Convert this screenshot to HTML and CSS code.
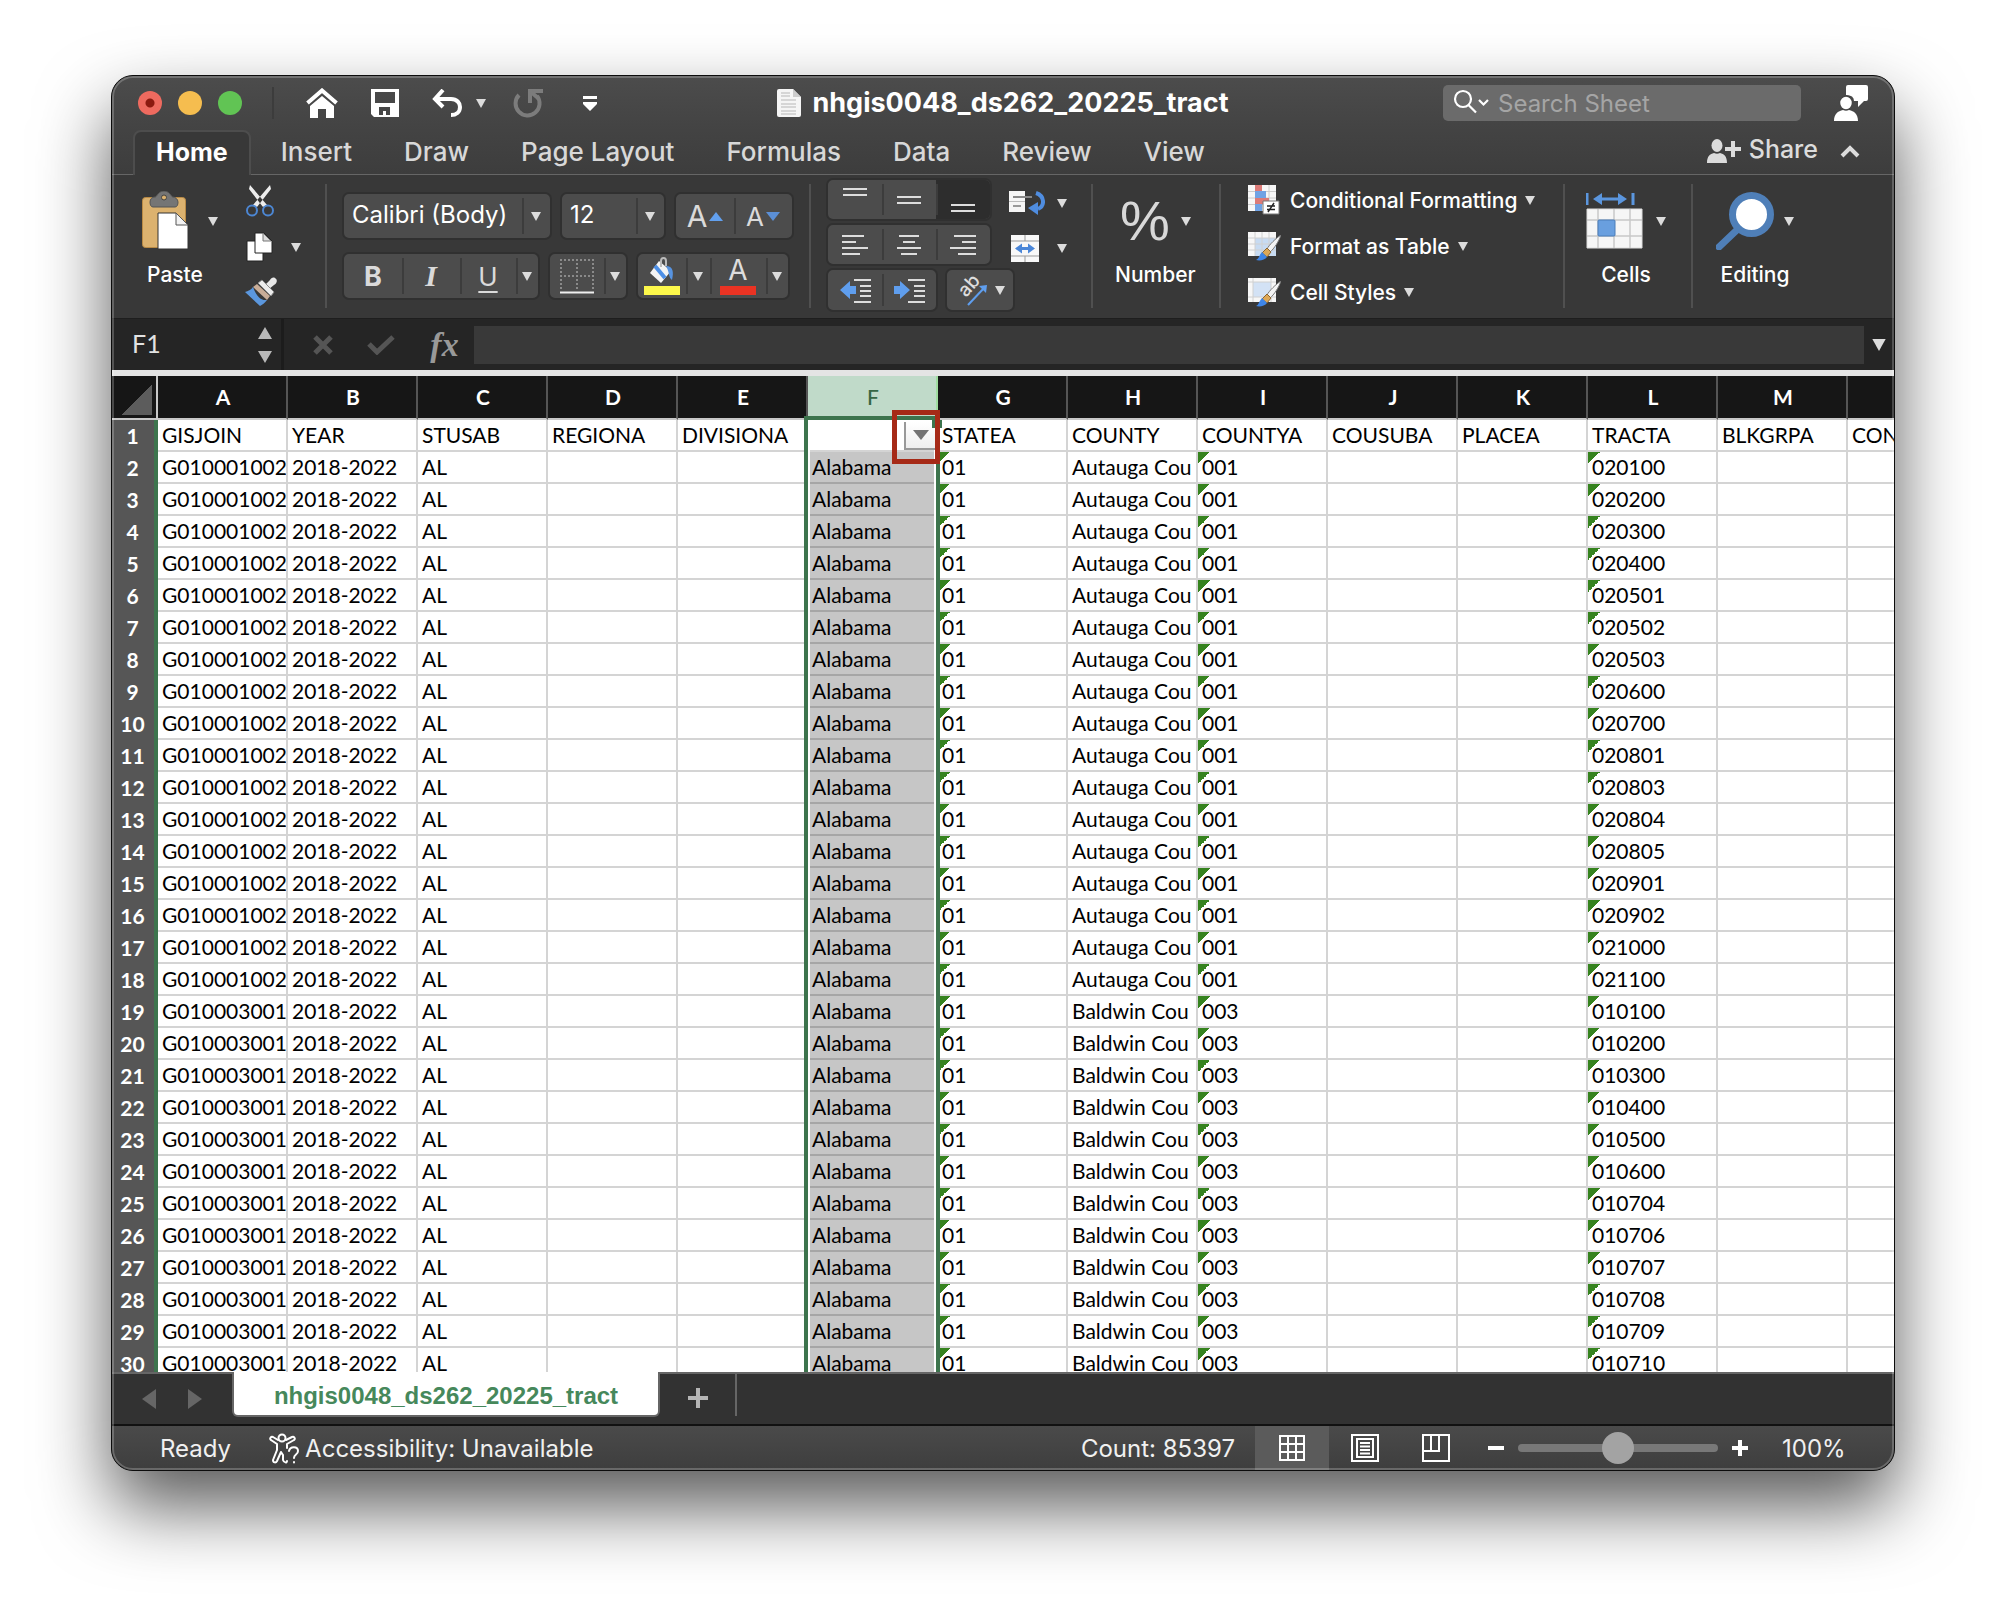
FILE: index.html
```html
<!DOCTYPE html>
<html lang="en">
<head>
<meta charset="utf-8">
<title>nhgis0048_ds262_20225_tract</title>
<link rel="stylesheet" href="styles.css">
</head>
<body>
<svg class="defs" aria-hidden="true">
  <symbol id="caret" viewBox="0 0 10 9"><path d="M0 0h10L5 9z" fill="currentColor"/></symbol>
  <symbol id="brushpen" viewBox="0 0 26 26">
    <path d="M25 0C20 3 13 10 11 14l3 3C18 14 23 6 25 0z" fill="#f4f4f4" stroke="#777" stroke-width="1"/>
    <path d="M11 13l4 4-4 5-5-4z" fill="#dda857" stroke="#8a6430" stroke-width="1"/>
    <path d="M6 17l5 5c-2 3-7 4-11 3 3-1 3-5 6-8z" fill="#3f86e8"/>
  </symbol>
</svg>
<main class="window">
  <header class="titlebar">
    <div class="title-left">
      <div class="lights">
        <button class="light close" aria-label="Close"></button>
        <button class="light minimize" aria-label="Minimize"></button>
        <button class="light zoom" aria-label="Zoom"></button>
      </div>
      <div class="quick">
        <button aria-label="Home"><svg width="32" height="30" viewBox="0 0 32 30"><path d="M1.500 15L16 2.500 30.500 15" fill="none" stroke="#fff" stroke-width="4"/><path d="M4 18L16 8l12 10v12h-8v-9h-8v9H4z" fill="#fff"/></svg></button>
        <button aria-label="Save"><svg width="28" height="28" viewBox="0 0 28 28"><path fill-rule="evenodd" d="M0 0h28v28H3l-3-3zM4 3v11h20V3zM8 18v8h4v-4h3v4h4v-8z" fill="#fff"/></svg></button>
        <button class="undo" aria-label="Undo"><svg width="31" height="28" viewBox="0 0 31 28"><path d="M11 1L3 10l8 8M3 10h16c6 0 9 4 9 8 0 5-4 8-9 8" fill="none" stroke="#fff" stroke-width="4"/></svg><svg class="caret"><use href="#caret"/></svg></button>
        <button class="redo" aria-label="Redo"><svg width="31" height="31" viewBox="0 0 31 31"><path d="M6 7a12 12 0 1 0 18 1M17 15V3h13" fill="none" stroke="#7c7c7c" stroke-width="4"/><path d="M18 4l7 6" stroke="#7c7c7c" stroke-width="4"/></svg></button>
        <button aria-label="Customize toolbar"><svg width="14" height="15" viewBox="0 0 14 15"><path d="M0 0h14v3H0zM0 6h14v2l-7 7-7-7z" fill="#fff"/></svg></button>
      </div>
    </div>
    <h1 class="title"><svg width="24" height="28" viewBox="0 0 24 28"><path d="M2 0h14l8 8v18q0 2-2 2H2q-2 0-2-2V2q0-2 2-2z" fill="#f5f5f5"/><path d="M16 0v8h8" fill="#ccc"/><path d="M4 4h9M4 7h9M4 11h15M4 15h15M4 18h15M4 22h15M4 25h15" stroke="#ccc" stroke-width="1.500"/></svg>nhgis0048_ds262_20225_tract</h1>
    <div class="title-right">
      <label class="search"><svg width="36" height="30" viewBox="0 0 36 30"><circle cx="10" cy="11" r="8" fill="none" stroke="#fff" stroke-width="2.200"/><path d="M15.500 17L23 24.500M26 12l4.500 4.500L35 12" fill="none" stroke="#fff" stroke-width="2.200"/></svg><input type="text" placeholder="Search Sheet" aria-label="Search Sheet"></label>
      <button aria-label="Account"><svg width="34" height="36" viewBox="0 0 34 36"><path d="M14 0h18q2 0 2 2v12q0 2-2 2h-2l-6 6v-6h-4q0-6-8-6V2q0-2 2-2z" fill="#fff"/><ellipse cx="12" cy="18" rx="6.500" ry="7" fill="#fff" stroke="#464646" stroke-width="1.500"/><path d="M0 36c0-7 4-10 9-11q3 1.500 6 0c5 1 9 4 9 11z" fill="#fff"/></svg></button>
    </div>
  </header>
  <nav class="tabs">
    <button class="tab active">Home</button><button class="tab">Insert</button><button class="tab">Draw</button><button class="tab">Page Layout</button><button class="tab">Formulas</button><button class="tab">Data</button><button class="tab">Review</button><button class="tab">View</button>
    <div class="tabs-right">
      <button class="share"><svg width="34" height="28" viewBox="0 0 34 28"><ellipse cx="10" cy="10.500" rx="5.500" ry="6.500" fill="#dcdcdc"/><path d="M0 28c0-7 3-9 7-10q3 1.500 6 0c4 1 7 3 7 10z" fill="#dcdcdc"/><path d="M26 6v16M18 14h16" stroke="#dcdcdc" stroke-width="4"/></svg>Share</button>
      <button aria-label="Collapse ribbon"><svg width="20" height="17" viewBox="0 0 20 17"><path d="M2 15l8-8 8 8" fill="none" stroke="#dcdcdc" stroke-width="4"/></svg></button>
    </div>
  </nav>
  <section class="ribbon">
    <div class="group clipboard">
      <button class="big paste">
        <span class="pic"><svg width="48" height="60" viewBox="0 0 48 60"><rect x="0.500" y="6.500" width="43" height="50" rx="3" fill="#dcb26f" stroke="#b98a45"/><path d="M13 6c2 0 3-6 9-6s7 6 9 6 5 2 5 5-1 5-3 5H11c-2 0-3-2-3-5s2-5 5-5z" fill="#757575" stroke="#555"/><circle cx="22" cy="6.500" r="2.500" fill="#dcb26f" stroke="#444"/><path d="M16 22h18l12 12v24H16z" fill="#fff" stroke="#333"/><path d="M34 22v12h12z" fill="#f2f2f2" stroke="#555"/></svg><svg class="caret"><use href="#caret"/></svg></span>
        Paste
      </button>
      <div class="clip-col">
        <button aria-label="Cut"><svg width="30" height="32" viewBox="0 0 30 32"><path d="M5 0L4 4l14 18 4-2zM25 0l1 4-14 18-4-2z" fill="#ededed"/><circle cx="7" cy="25.500" r="5" fill="none" stroke="#4c86d2" stroke-width="2"/><circle cx="23" cy="25.500" r="5" fill="none" stroke="#4c86d2" stroke-width="2"/></svg></button>
        <button aria-label="Copy"><svg width="30" height="30" viewBox="0 0 30 30"><path d="M2 9h16v20H2z" fill="#fff" stroke="#222"/><path d="M10 1h9l8 8v12H10z" fill="#fff" stroke="#222"/><path d="M18 1v8h8z" fill="#ddd" stroke="#777"/></svg><svg class="caret"><use href="#caret"/></svg></button>
        <button aria-label="Format Painter"><svg width="32" height="30" viewBox="0 0 32 30"><path d="M30 1c3 2 2 5-1 7l-5 4-4-4 5-5c1-2 3-3 5-2z" fill="#e8e8e8"/><path d="M13 6l4-3 12 12-3 4z" fill="#ececec" stroke="#888"/><path d="M12 7l13 12-3 4L8 10z" fill="#c9ad98"/><path d="M8 10c-2 3-5 4-8 5l15 14c2-1 5-3 7-6-7 1-11-5-14-13z" fill="#5b97de"/></svg></button>
      </div>
    </div>
    <div class="group font">
      <div class="row">
        <div class="box"><select class="family" aria-label="Font"><option>Calibri (Body)</option></select><span class="drop"><svg class="caret"><use href="#caret"/></svg></span></div>
        <div class="box"><select class="size" aria-label="Font size"><option>12</option></select><span class="drop"><svg class="caret"><use href="#caret"/></svg></span></div>
        <div class="box"><button class="w58 glyph" aria-label="Increase font size"><span class="l30">A</span><svg width="14" height="9" viewBox="0 0 14 9"><path d="M0 9l7-9 7 9z" fill="#62a0ee"/></svg></button><button class="w58 glyph" aria-label="Decrease font size"><span class="l26">A</span><svg width="14" height="9" viewBox="0 0 14 9"><path d="M0 0l7 9 7-9z" fill="#5b8fd6"/></svg></button></div>
      </div>
      <div class="row">
        <div class="box"><button class="w58 glyph b">B</button><button class="w58 glyph i">I</button><button class="w56 glyph u">U</button><button class="w22" aria-label="Underline styles"><svg class="caret"><use href="#caret"/></svg></button></div>
        <div class="box"><button class="w54" aria-label="Borders"><svg width="34" height="35" viewBox="0 0 34 35"><path d="M1 0v31M17 0v31M33 0v31M0 1h34M0 17h34" stroke="#8a8a8a" stroke-width="2" stroke-dasharray="2 2"/><path d="M0 33.500h34" stroke="#eee" stroke-width="2"/></svg></button><button class="w22" aria-label="Border styles"><svg class="caret"><use href="#caret"/></svg></button></div>
        <div class="box"><button class="w50" aria-label="Fill colour"><svg width="36" height="38" viewBox="0 0 36 38"><path d="M15 4L6 16l11 10 10-12z" fill="#f4f4f4"/><path d="M11 9l10 12" stroke="#4d8fe6" stroke-width="4"/><path d="M22 9c7 0 8 6 6 14-4-3-2-7-6-14z" fill="#5793e0"/><path d="M17 10V4c0-4 5-4 5 0v5" fill="none" stroke="#bbb" stroke-width="2"/><path d="M0 29h36v9H0z" fill="#fdf84b"/></svg></button><button class="w24" aria-label="Fill colours"><svg class="caret"><use href="#caret"/></svg></button><button class="w56 fontcolor" aria-label="Font colour"><span>A</span></button><button class="w22" aria-label="Font colours"><svg class="caret"><use href="#caret"/></svg></button></div>
      </div>
    </div>
    <div class="group align">
      <div class="stack">
        <div class="box low"><button class="w54" aria-label="Top align"><svg class="al" viewBox="0 0 26 26"><path d="M1 2h24M1 8h24"/></svg></button><button class="w54" aria-label="Middle align"><svg class="al" viewBox="0 0 26 26"><path d="M1 10h24M1 16h24"/></svg></button><button class="w54 pressed" aria-label="Bottom align"><svg class="al" viewBox="0 0 26 26"><path d="M1 18h24M1 24h24"/></svg></button></div>
        <div class="box low"><button class="w54" aria-label="Align left"><svg class="al" viewBox="0 0 26 26"><path d="M0 4h22M0 10h14M0 16h26M0 22h18"/></svg></button><button class="w54" aria-label="Centre"><svg class="al" viewBox="0 0 26 26"><path d="M3 4h20M7 10h12M1 16h24M5 22h16"/></svg></button><button class="w54" aria-label="Align right"><svg class="al" viewBox="0 0 26 26"><path d="M4 4h22M12 10h14M0 16h26M8 22h18"/></svg></button></div>
        <div class="pair">
          <div class="box low"><button class="w54" aria-label="Decrease indent"><svg width="31" height="26" viewBox="0 0 31 26"><path d="M14 3h17M20 9h11M20 14h11M20 19h11M14 25h17" stroke="#ddd" stroke-width="2"/><path d="M0 13l10-9v5h6v8h-6v5z" fill="#5f9eee"/></svg></button><button class="w54" aria-label="Increase indent"><svg width="31" height="26" viewBox="0 0 31 26"><path d="M14 3h17M20 9h11M20 14h11M20 19h11M14 25h17" stroke="#ddd" stroke-width="2"/><path d="M16 13L6 4v5H0v8h6v5z" fill="#5f9eee"/></svg></button></div>
          <div class="box low"><button class="orient" aria-label="Orientation"><svg width="34" height="34" viewBox="0 0 34 34"><text transform="translate(11 25) rotate(-48)" font-size="19" font-weight="500" font-family="Inter" fill="#ddd">ab</text><path d="M13 32L30 14" stroke="#5f9eee" stroke-width="2"/><path d="M24 13l8-1-1 8z" fill="#5f9eee"/></svg><svg class="caret"><use href="#caret"/></svg></button></div>
        </div>
      </div>
      <div class="wraps">
        <button aria-label="Wrap text"><svg width="36" height="24" viewBox="0 0 36 24"><path d="M0 0h16v21H0z" fill="#f5f5f5"/><path d="M0 10.500h16" stroke="#bbb"/><path d="M4 6h19" stroke="#888" stroke-width="2"/><path d="M4 15h8" stroke="#999" stroke-width="2"/><path d="M27 2c9 3 9 13 2 16" fill="none" stroke="#4f8de0" stroke-width="4"/><path d="M29 11v13l-10-7z" fill="#4f8de0"/></svg><svg class="caret"><use href="#caret"/></svg></button>
        <button aria-label="Merge"><svg width="31" height="27" viewBox="-2 0 31 27"><path d="M0 0h28v27H0z" fill="#f8f8f8"/><path d="M0 6h28M0 21h28M14 0v6M14 21v6" stroke="#999"/><path d="M4 13.500l7-5v3.500h6V8.500l7 5-7 5V15h-6v3.500z" fill="#4a86d8"/></svg><svg class="caret"><use href="#caret"/></svg></button>
      </div>
    </div>
    <div class="group number"><button class="big"><span class="pic"><span class="percent">%</span><svg class="caret"><use href="#caret"/></svg></span>Number</button></div>
    <div class="group styles">
      <button class="line"><svg width="33" height="30" viewBox="0 0 33 30"><path d="M0 0h28v26H0z" fill="#f7f7f7"/><path d="M0 6.500h28M0 13h28M0 19.500h28M21 0v26" stroke="#ccc"/><path d="M7 0h7v6H7zM7 13h14v6H7z" fill="#dc7b78"/><path d="M7 6h11v7H7zM7 19h7v7H7z" fill="#70a2e4"/><path d="M15 16h16v13H15z" fill="#fff" stroke="#777"/><path d="M19 21h8M19 24.500h8M26 18l-6 9" stroke="#222" stroke-width="1.500"/></svg>Conditional Formatting<svg class="caret"><use href="#caret"/></svg></button>
      <button class="line"><svg width="33" height="30" viewBox="0 0 33 30"><path d="M0 1h28v24H0z" fill="#f7f7f7"/><path d="M7 7h21v18H7z" fill="#c7dbf2"/><path d="M0 7h28M0 13h28M0 19h28M7 1v24M14 1v24M21 1v24" stroke="#d0d0d0"/><use href="#brushpen" x="8" y="4" width="26" height="26"/></svg>Format as Table<svg class="caret"><use href="#caret"/></svg></button>
      <button class="line"><svg width="33" height="30" viewBox="0 0 33 30"><path d="M0 1h28v24H0z" fill="#f7f7f7"/><path d="M5 5h18v15H5z" fill="#d3e2f5"/><path d="M0 5h28M0 20h28M5 1v24M23 1v24" stroke="#d0d0d0"/><use href="#brushpen" x="8" y="4" width="26" height="26"/></svg>Cell Styles<svg class="caret"><use href="#caret"/></svg></button>
    </div>
    <div class="group cells"><button class="big"><span class="pic"><svg width="58" height="56" viewBox="0 0 58 56"><path d="M1 0v12M47 0v12" stroke="#5b96de" stroke-width="3"/><path d="M7 6l9-6v4.500h16V0l9 6-9 6V7.500H16V12z" fill="#5b96de"/><path d="M1 16h55v39H1z" fill="#f6f6f6" stroke="#ddd"/><path d="M12 16v39M28 16v39M44 16v39M1 27h55M1 43h55" stroke="#c8c8c8" stroke-width="1.500"/><rect x="12" y="27" width="17" height="16" rx="1" fill="#699fdf" stroke="#4a7cb8"/></svg><svg class="caret"><use href="#caret"/></svg></span>Cells</button></div>
    <div class="group editing"><button class="big"><span class="pic"><svg width="58" height="58" viewBox="0 0 58 58"><path d="M3 55l20-19" stroke="#4f7fb8" stroke-width="7" stroke-linecap="round"/><circle cx="35.500" cy="22.500" r="19" fill="#fff" stroke="#4f7fb8" stroke-width="7"/></svg><svg class="caret"><use href="#caret"/></svg></span>Editing</button></div>
  </section>
  <section class="formula">
    <label class="namebox"><input type="text" value="F1" aria-label="Name box"><svg width="14" height="36" viewBox="0 0 14 36"><path d="M0 12L7 0l7 12zM0 24h14L7 36z" fill="#b9b9b9"/></svg></label>
    <button aria-label="Cancel"><svg width="20" height="20" viewBox="0 0 20 20"><path d="M2 2l16 16M18 2L2 18" stroke="#555" stroke-width="5"/></svg></button>
    <button aria-label="Enter"><svg width="28" height="20" viewBox="0 0 28 20"><path d="M2 9l8 8L26 2" fill="none" stroke="#555" stroke-width="5"/></svg></button>
    <button class="fx" aria-label="Insert function">fx</button>
    <input class="formula-input" type="text" aria-label="Formula">
    <button class="expand" aria-label="Expand"><svg class="caret"><use href="#caret"/></svg></button>
  </section>
  <section class="sheet">
    <table class="grid">
      <thead><tr id="letters"><td class="corner"></td></tr></thead>
      <tbody id="rows"></tbody>
    </table>
    <div class="selection"></div>
    <button class="filter" aria-label="Filter"><svg width="16" height="10" viewBox="0 0 16 10"><path d="M0 0h16L8 10z" fill="#737373"/></svg></button>
    <div class="handle"></div>
    <div class="callout"></div>
  </section>
  <nav class="sheetbar">
    <button aria-label="Previous sheet"><svg width="14" height="20" viewBox="0 0 14 20"><path d="M14 0v20L0 10z" fill="#666"/></svg></button>
    <button aria-label="Next sheet"><svg width="14" height="20" viewBox="0 0 14 20"><path d="M0 0v20l14-10z" fill="#666"/></svg></button>
    <button class="sheet-tab">nhgis0048_ds262_20225_tract</button>
    <button class="add" aria-label="Add sheet"><svg width="20" height="20" viewBox="0 0 20 20"><path d="M10 0v20M0 10h20" stroke="#b5b5b5" stroke-width="4"/></svg></button>
  </nav>
  <footer class="status">
    <span class="ready">Ready</span>
    <button class="access"><svg width="31" height="31" viewBox="0 0 31 31" fill="none" stroke="#fff" stroke-width="2" stroke-linejoin="round" stroke-linecap="round"><circle cx="13" cy="5" r="3.500"/><path d="M17 7l6-3c2-1 4 2 2 3l-7 4v4M9 7L4 4C2 3 0 6 2 7l6 4v6L4 27c0 3 3 3 4 1l4-9 2 3v5c1 3 4 3 4 1"/><path d="M20 18c1-5 9-5 9 0 0 4-4 3-4 7M25 29v.5"/></svg>Accessibility: Unavailable</button>
    <span class="count">Count: 85397</span>
    <button class="view on" aria-label="Normal view"><svg width="28" height="28" viewBox="0 0 28 28" fill="none" stroke="#fff" stroke-width="2"><path d="M2 2h24v24H2zM10 2v24M18 2v24M2 10h24M2 18h24"/></svg></button>
    <button class="view" aria-label="Page layout view"><svg width="28" height="28" viewBox="0 0 28 28" fill="none" stroke="#fff" stroke-width="2"><path d="M1 1h26v26H1zM6 5h16v18H6zM9 9h10M9 12.500h10M9 16h10M9 19.500h10"/></svg></button>
    <button class="view" aria-label="Page break view"><svg width="28" height="28" viewBox="0 0 28 28" fill="none" stroke="#fff" stroke-width="2"><path d="M1 1h26v26H1zM9 1v16M17 1v16M1 17h17"/></svg></button>
    <button class="step" aria-label="Zoom out"><svg width="16" height="16" viewBox="0 0 16 16"><path d="M0 8h16" stroke="#fff" stroke-width="4"/></svg></button>
    <input class="zoom-range" type="range" min="0" max="100" value="50" aria-label="Zoom">
    <button class="step" aria-label="Zoom in"><svg width="16" height="16" viewBox="0 0 16 16"><path d="M0 8h16M8 0v16" stroke="#fff" stroke-width="4"/></svg></button>
    <span class="percentage">100%</span>
  </footer>
</main>
<script src="app.js"></script>
</body>
</html>
```
FILE: styles.css
```css
* { box-sizing: border-box; }
html, body { height: 100%; }
body {
  margin: 0;
  padding: 75px 111px 147px;
  background: #fff;
  font-family: Inter, "Liberation Sans", sans-serif;
  font-size: 21px;
  color: #fff;
}
button, input, select {
  margin: 0; padding: 0; border: 0; border-radius: 0; background: none; outline: 0;
  font: inherit; color: inherit; appearance: none;
}
button { display: flex; align-items: center; justify-content: center; white-space: nowrap; }
svg { display: block; flex: none; }
.defs { position: absolute; width: 0; height: 0; }
.caret { width: 10px; height: 9px; color: #dcdcdc; }

.window {
  position: relative;
  height: 100%;
  min-width: 1500px;
  display: flex;
  flex-direction: column;
  overflow: hidden;
  border: 1px solid #0c0c0c;
  border-radius: 22px;
  background: #383838;
  box-shadow: 0 36px 72px rgba(0, 0, 0, .65);
}
.window::after {
  content: "";
  position: absolute;
  inset: 0;
  border: 2px solid rgba(255, 255, 255, .22);
  border-radius: 21px;
  pointer-events: none;
}

/* title bar */
.titlebar {
  flex: none;
  height: 54px;
  display: grid;
  grid-template-columns: 1fr auto 1fr;
  align-items: center;
  background: linear-gradient(#4c4c4c, #434343);
}
.title-left, .lights, .quick, .title-right { display: flex; align-items: center; min-width: 0; }
.lights { gap: 16px; padding: 4px 30px 4px 26px; border-right: 2px solid #3c3c3c; }
.light { width: 24px; height: 24px; border-radius: 50%; }
.close { background: radial-gradient(circle, #8c1a10 4px, #ee6a5f 5px); }
.minimize { background: #f5bd4f; }
.zoom { background: #61c454; }
.quick { padding-left: 32px; gap: 33px; }
.undo { gap: 13px; }
.quick .redo { margin-left: -6px; }
.quick button:last-child { margin-left: 6px; }
.title { margin: 0; display: flex; align-items: center; gap: 11px; font-size: 27px; line-height: 32px; font-weight: 700; }
.title-right { justify-content: flex-end; gap: 33px; padding-right: 26px; }
.search { flex: 0 1 358px; min-width: 0; height: 36px; display: flex; align-items: center; gap: 9px; padding: 0 10px; border-radius: 5px; background: #6b6b6b; }
.search input { flex: 1; min-width: 0; font-size: 24px; }
.search input::placeholder { color: #a5a5a5; opacity: 1; }

/* ribbon tabs */
.tabs { flex: none; height: 45px; display: flex; padding-left: 21px; background: linear-gradient(#434343, #3d3d3d); border-bottom: 1px solid #666; }
.tab { height: 44px; padding: 0 26px 2px; font-size: 26px; font-weight: 500; color: #d8d8d8; }
.active { height: 45px; padding: 0 21px 4px; margin-right: 4px; border: 2px solid #4d4d4d; border-bottom: 0; border-radius: 8px 8px 0 0; background: #383838; font-size: 25px; font-weight: 700; color: #fff; }
.tabs-right { margin-left: auto; padding: 0 34px 6px 0; display: flex; align-items: center; gap: 22px; }
.share { gap: 8px; font-size: 25px; font-weight: 500; color: #dcdcdc; }

/* ribbon */
.ribbon { flex: none; height: 143px; display: flex; align-items: flex-start; padding-top: 5px; background: #383838; }
.group { position: relative; flex: none; height: 132px; }
.group:not(:last-child)::after { content: ""; position: absolute; right: 0; top: 4px; width: 2px; height: 124px; background: #505050; }
.big { flex-direction: column; font-size: 21px; line-height: 26px; font-weight: 500; gap: 11px; }
.pic { height: 60px; display: flex; align-items: center; justify-content: center; gap: 18px; }
.clipboard { width: 215px; display: flex; }
.paste { height: 112px; padding: 11px 0 0 30px; align-items: flex-start; text-indent: 5px; justify-content: flex-start; }
.clip-col { padding: 5px 0 0 27px; display: flex; flex-direction: column; gap: 15px; align-items: flex-start; }
.clip-col button { gap: 16px; }

.box { height: 48px; display: flex; border: 2px solid #303030; border-radius: 7px; background: #4c4c4c; overflow: hidden; }
.box > * + * { position: relative; }
.box > * + *::before { content: ""; position: absolute; left: 0; top: 4px; bottom: 4px; width: 2px; background: #3c3c3c; }
.font { width: 484px; padding: 12px 0 0 15px; display: flex; flex-direction: column; gap: 12px; }
.row { display: flex; gap: 8px; }
.box select { font-size: 24px; padding: 0 0 3px 8px; }
.family { width: 178px; }
.size { width: 74px; }
.drop { width: 28px; display: flex; align-items: center; justify-content: center; }
.w58 { width: 58px; } .w56 { width: 56px; } .w54 { width: 54px; } .w50 { width: 48px; } .w24 { width: 24px; } .w22 { width: 22px; }
.glyph { gap: 2px; color: #dadada; }
.l30 { font-size: 30px; }
.l26 { font-size: 26px; }
.b { font-size: 27px; font-weight: 700; }
.i { font: italic 700 30px "Liberation Serif", serif; }
.u { font-size: 26px; text-decoration: underline; text-decoration-thickness: 2px; text-underline-offset: 5px; }
.fontcolor span { width: 36px; height: 38px; border-bottom: 9px solid #ea3323; font-size: 28px; line-height: 26px; color: #ddd; }

.align { width: 282px; padding-left: 15px; display: flex; gap: 17px; }
.align .stack { margin-top: -2px; width: 166px; }
.stack { display: flex; flex-direction: column; gap: 2px; align-items: flex-start; }
.low { height: 44px; }
.pair { display: flex; gap: 7px; }
.al { width: 26px; height: 26px; stroke: #ddd; stroke-width: 2; }
.pressed { background: #2d2d2d; }
.orient { width: 66px; gap: 6px; }
.wraps { padding-top: 9px; display: flex; flex-direction: column; gap: 17px; }
.wraps button { width: 58px; height: 28px; justify-content: space-between; }

.number { width: 128px; padding: 11px 0 0 22px; }
.number .pic { gap: 11px; }
.percent { font-size: 56px; line-height: 60px; color: #d8d8d8; font-family: "Liberation Sans", sans-serif; }
.styles { width: 344px; padding: 5px 0 0 27px; display: flex; flex-direction: column; gap: 16px; align-items: flex-start; }
.line { height: 30px; gap: 8px; font-size: 21px; font-weight: 500; }
.line svg:first-child { margin-right: 1px; }
.cells { width: 128px; padding: 11px 0 0 21px; }
.cells .pic { gap: 12px; }
.editing { padding: 11px 0 0 23px; }
.editing .pic { gap: 10px; }

/* formula bar */
.formula { flex: none; height: 52px; display: flex; align-items: center; background: #252525; border-top: 1px solid #1e1e1e; }
.namebox { width: 172px; height: 100%; padding: 0 9px 0 20px; display: flex; align-items: center; justify-content: space-between; border-right: 3px solid #1c1c1c; }
.namebox input { width: 80px; padding-bottom: 4px; font-family: Lato, sans-serif; font-size: 25px; color: #e2e2e2; }
.formula > button { margin-left: 29px; }
.formula > button + button { margin-left: 34px; }
.formula > .fx { width: 31px; font: italic 700 34px "Liberation Serif", serif; line-height: 40px; color: #999; }
.formula-input { flex: 1; height: 38px; margin-left: 14px; padding: 0 8px; background: #393939; }
.formula > .expand { width: 30px; margin: 0; }
.expand .caret { width: 14px; height: 12px; }

/* worksheet */
.sheet { position: relative; flex: 1; min-height: 0; overflow: hidden; border-top: 6px solid #e4e4e4; background: #fff; }
.grid { width: 1866px; table-layout: fixed; border-collapse: separate; border-spacing: 0; font-family: Lato, sans-serif; font-size: 21px; line-height: 26px; color: #000; }
.grid td, .grid th { width: 130px; height: 32px; padding: 2px 0 2px 4px; border-right: 2px solid #d4d4d4; border-bottom: 2px solid #d4d4d4; text-align: left; white-space: nowrap; overflow: hidden; }
.grid thead th { height: 44px; padding: 0 0 0 2px; background: #161616; color: #fff; text-align: center; border-right-color: #555; border-bottom-color: #c8c8c8; }
.grid .corner { width: 46px; background: linear-gradient(135deg, transparent 50%, #5c5c5c 50%) 10px 9px / 30px 30px no-repeat #161616; border-color: #c8c8c8; }
.grid thead .picked { background: #c0dac9; color: #366645; border-right-color: #9fdc9f; font-weight: 500; }
.grid tbody th { width: 46px; padding: 2px 1px 2px 0; background: #565656; color: #fff; text-align: center; border-right: 4px solid #3d744d; border-bottom: 0; }
.grid .sel { background: #c6c6c6; border-bottom-color: #a6a6a6; }
.grid .flag { background: linear-gradient(135deg, #36831f 50%, transparent 50%) 0 0 / 12px 12px no-repeat; }
.selection { position: absolute; left: 692px; top: 40px; width: 136px; height: 1200px; border: 4px solid #3d744d; box-shadow: inset 0 0 0 2px #fff; }
.filter { position: absolute; left: 792px; top: 46px; width: 31px; height: 28px; border-left: 2px solid #999; border-bottom: 2px solid #999; background: linear-gradient(#fff, #eee); }
.handle { position: absolute; left: 820px; top: 44px; width: 10px; height: 8px; background: #3d744d; }
.callout { position: absolute; left: 780px; top: 34px; width: 48px; height: 54px; border: 5px solid #a62a17; }

/* sheet tabs */
.sheetbar { flex: none; height: 52px; display: flex; align-items: center; padding-left: 30px; background: #323232; border-top: 2px solid #666; }
.sheetbar button + button { margin-left: 32px; }
.sheetbar .sheet-tab { align-self: flex-start; height: 45px; margin: -2px 0 0 30px; width: 428px; padding-top: 4px; border: 2px solid #666; border-top: 0; border-radius: 0 0 6px 6px; background: #fff; color: #46885b; font: 700 24px "Liberation Sans", sans-serif; }
.sheetbar .add { margin: 0; width: 77px; height: 42px; align-self: flex-start; padding-top: 6px; border-right: 2px solid #666; }

/* status bar */
.status { flex: none; height: 46px; display: flex; align-items: center; padding-left: 48px; background: linear-gradient(#4a4a4a, #3e3e3e); border-top: 2px solid #111; font-size: 24px; color: #f0f0f0; }
.access { margin-left: 38px; gap: 5px; }
.count { margin-left: auto; margin-right: 20px; }
.view { width: 71px; height: 100%; }
.on { width: 74px; background: #5b5b5b; }
.step { margin: 0 14px; }
.view + .step { margin-left: 17px; }
.zoom-range { width: 200px; height: 32px; }
.zoom-range::-webkit-slider-runnable-track { height: 8px; border-radius: 4px; background: #787878; }
.zoom-range::-webkit-slider-thumb { appearance: none; width: 32px; height: 32px; margin-top: -12px; border-radius: 50%; background: #a3a3a3; }
.percentage { width: 112px; margin-left: 20px; }
```
FILE: app.js
```js
const letters = 'ABCDEFGHIJKLM'.split('').concat('');
const fields = ['GISJOIN', 'YEAR', 'STUSAB', 'REGIONA', 'DIVISIONA', '', 'STATEA', 'COUNTY', 'COUNTYA', 'COUSUBA', 'PLACEA', 'TRACTA', 'BLKGRPA', 'CON'];
const tracts = {
  autauga: ['020100', '020200', '020300', '020400', '020501', '020502', '020503', '020600', '020700', '020801', '020803', '020804', '020805', '020901', '020902', '021000', '021100'],
  baldwin: ['010100', '010200', '010300', '010400', '010500', '010600', '010704', '010706', '010707', '010708', '010709', '010710']
};

const row = (join, county, code) => tract =>
  [join, '2018-2022', 'AL', '', '', 'Alabama', '01', county, code, '', '', tract, '', ''];
const data = [
  fields,
  ...tracts.autauga.map(row('G010001002', 'Autauga Cou', '001')),
  ...tracts.baldwin.map(row('G010003001', 'Baldwin Cou', '003'))
];

const head = document.getElementById('letters');
letters.forEach(letter => {
  const th = document.createElement('th');
  th.textContent = letter;
  if (letter === 'F') th.className = 'picked';
  head.append(th);
});

const body = document.getElementById('rows');
data.forEach((values, index) => {
  const tr = body.insertRow();
  const th = document.createElement('th');
  th.textContent = index + 1;
  tr.append(th);
  values.forEach((value, column) => {
    const td = tr.insertCell();
    td.textContent = value;
    if (index === 0) return;
    if (column === 5) td.className = 'sel';
    if ([6, 8, 11].includes(column)) td.className = 'flag';
  });
});
```
